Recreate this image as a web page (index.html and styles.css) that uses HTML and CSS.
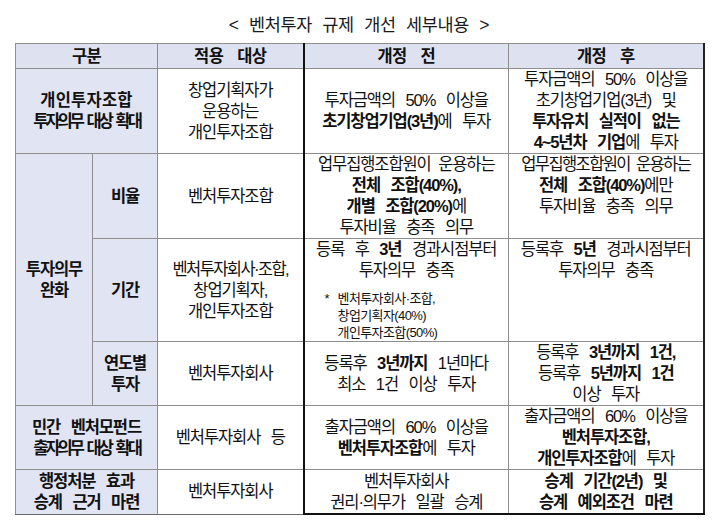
FILE: index.html
```html
<!DOCTYPE html>
<html lang="ko">
<head>
<meta charset="utf-8">
<title>벤처투자 규제 개선 세부내용</title>
<link rel="stylesheet" href="styles.css">
</head>
<body>
<div class="page">
  <div class="title">&lt; 벤처투자 규제 개선 세부내용 &gt;</div>
  <table class="reg">
    <colgroup>
      <col class="c1a"><col class="c1b"><col class="c2"><col class="c3"><col class="c4">
    </colgroup>
    <thead>
      <tr class="r-head">
        <th colspan="2" class="h">구분</th>
        <th class="h">적용 대상</th>
        <th class="h before">개정 전</th>
        <th class="h after">개정 후</th>
      </tr>
    </thead>
    <tbody>
      <tr class="r1">
        <td colspan="2" class="cat"><span class="wide">개인투자조합</span><br><span class="cond">투자의무 대상 확대</span></td>
        <td>창업기획자가<br>운용하는<br>개인투자조합</td>
        <td class="before">투자금액의 50% 이상을<br><b>초기창업기업(3년)</b>에 투자</td>
        <td class="after">투자금액의 50% 이상을<br>초기창업기업(3년) 및<br><b>투자유치 실적이 없는</b><br><b>4~5년차 기업</b>에 투자</td>
      </tr>
      <tr class="r2">
        <td rowspan="3" class="cat">투자의무<br>완화</td>
        <td class="cat sub">비율</td>
        <td>벤처투자조합</td>
        <td class="before"><span class="tight">업무집행조합원이 운용하는</span><br><b>전체 조합(40%),</b><br><b>개별 조합(20%)</b>에<br>투자비율 충족 의무</td>
        <td class="after top"><span class="tighter">업무집행조합원이 운용하는</span><br><b>전체 조합(40%)</b>에만<br>투자비율 충족 의무</td>
      </tr>
      <tr class="r3">
        <td class="cat sub">기간</td>
        <td><span class="tight2">벤처투자회사·조합,</span><br>창업기획자,<br>개인투자조합</td>
        <td class="before top">
          <div class="main">등록 후 <b>3년</b> 경과시점부터<br>투자의무 충족</div>
          <div class="note"><span class="star">*</span><span class="note-lines"><span class="nl">벤처투자회사·조합,</span><span class="nl">창업기획자(40%)</span><span class="nl">개인투자조합(50%)</span></span></div>
        </td>
        <td class="after top">등록후 <b>5년</b> 경과시점부터<br>투자의무 충족</td>
      </tr>
      <tr class="r4">
        <td class="cat sub">연도별<br>투자</td>
        <td>벤처투자회사</td>
        <td class="before">등록후 <b>3년까지</b> 1년마다<br>최소 1건 이상 투자</td>
        <td class="after">등록후 <b>3년까지 1건,</b><br>등록후 <b>5년까지 1건</b><br>이상 투자</td>
      </tr>
      <tr class="r5">
        <td colspan="2" class="cat">민간 벤처모펀드<br><span class="cond">출자의무 대상 확대</span></td>
        <td>벤처투자회사 등</td>
        <td class="before">출자금액의 60% 이상을<br><b>벤처투자조합</b>에 투자</td>
        <td class="after">출자금액의 60% 이상을<br><b>벤처투자조합,</b><br><b>개인투자조합</b>에 투자</td>
      </tr>
      <tr class="r6">
        <td colspan="2" class="cat">행정처분 효과<br>승계 근거 마련</td>
        <td>벤처투자회사</td>
        <td class="before">벤처투자회사<br>권리·의무가 일괄 승계</td>
        <td class="after"><b>승계 기간(2년) 및</b><br><b>승계 예외조건 마련</b></td>
      </tr>
    </tbody>
  </table>
</div>
</body>
</html>
```

FILE: styles.css
```css
html, body {
  margin: 0;
  padding: 0;
  background: #ffffff;
}

body {
  font-family: "Liberation Sans", "Noto Sans CJK KR", sans-serif;
  color: #111;
}

.page {
  width: 720px;
  padding-left: 15px;
  box-sizing: border-box;
}

.title {
  padding-top: 14px;
  height: 22px;
  line-height: 22px;
  margin-bottom: 7px;
  width: 688px;
  text-align: center;
  font-size: 17.5px;
  letter-spacing: -0.4px;
  word-spacing: 6px;
  color: #1a1a1a;
}

.reg {
  width: 688px;
  border-collapse: collapse;
  table-layout: fixed;
  font-size: 16.5px;
  line-height: 21px;
  letter-spacing: -1.1px;
  word-spacing: 7px;
  border-top: 1px solid #6a6a6a;
  border-left: 1px solid #6a6a6a;
}

.c1a { width: 77px; }
.c1b { width: 65px; }
.c2 { width: 146px; }
.c3 { width: 205px; }
.c4 { width: 195px; }

.reg th,
.reg td {
  border: 1px solid #8e8e8e;
  padding: 0 1px;
  text-align: center;
  vertical-align: middle;
  white-space: nowrap;
  overflow: visible;
}

.reg th {
  background: #dde1f0;
  font-weight: 700;
  height: 24px;
  letter-spacing: -0.6px;
  word-spacing: 10px;
}

.reg b { font-weight: 700; }

.cat {
  background: #e1e4f2;
  font-weight: 700;
}

.wide { letter-spacing: 0.2px; }

.cond {
  letter-spacing: -3px;
  word-spacing: 3px;
}

.tight { letter-spacing: -1.1px; word-spacing: 4px; }
.tighter { letter-spacing: -1.6px; word-spacing: 3px; }
.tight2 { letter-spacing: -1.6px; }

.before { border-left: 2px solid #111 !important; }
.after { border-right: 2px solid #222 !important; }

.top { vertical-align: top !important; }

.r1 td { height: 82px; }
.r2 td { height: 83px; }
.r3 td { height: 101px; }
.r4 td { height: 63px; }
.r5 td { height: 59px; }
.r6 td { height: 43px; border-bottom: 1px solid #6a6a6a; }
.r6 td.before, .r6 td.after { border-bottom: 2px solid #111; }

.note {
  display: flex;
  justify-content: flex-start;
  text-align: left;
  margin-top: 9px;
  margin-left: 19px;
  font-size: 13px;
  letter-spacing: -0.6px;
  word-spacing: 0;
}

.star {
  width: 13px;
  flex: none;
  line-height: 17px;
}

.note-lines {
  display: flex;
  flex-direction: column;
}

.nl {
  display: block;
  height: 17px;
  line-height: 17px;
}
```
